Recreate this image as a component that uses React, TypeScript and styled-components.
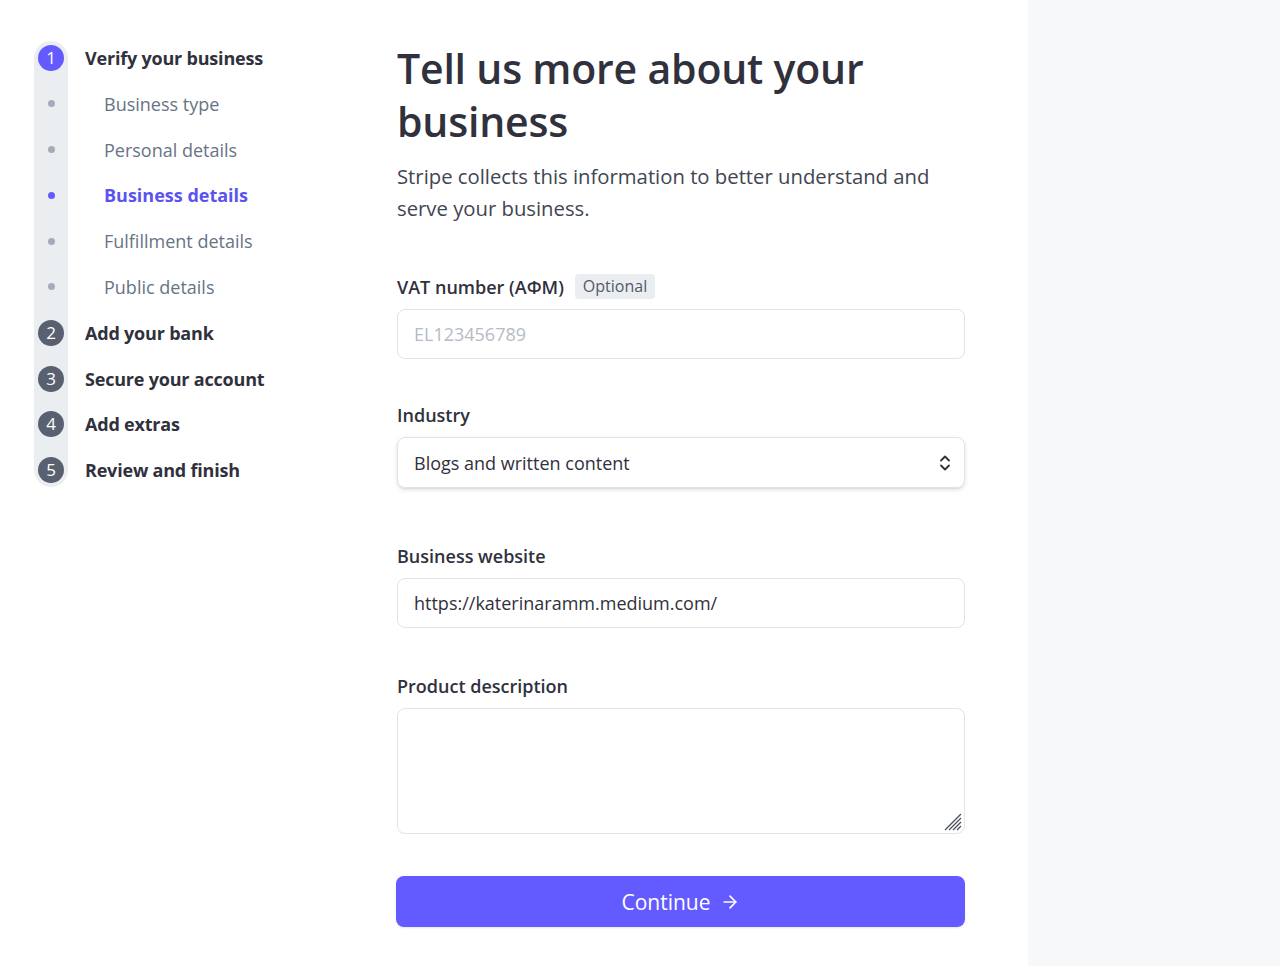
import React from 'react';
import styled, { createGlobalStyle } from 'styled-components';
import { ArrowRight } from 'lucide-react';

const GlobalStyle = createGlobalStyle`
  html, body {
    margin: 0;
    padding: 0;
    background: #ffffff;
  }
  body {
    font-family: "Open Sans", "Noto Sans", "Liberation Sans", sans-serif;
    color: #30313d;
    -webkit-font-smoothing: antialiased;
  }
  * {
    box-sizing: border-box;
  }
`;

const ROW_GAP = 19.8;

const Page = styled.div`
  display: flex;
  min-height: 966px;
`;

const Content = styled.div`
  width: 1028px;
  display: flex;
  align-items: flex-start;
  padding: 41px 0 0 34px;
`;

const Aside = styled.aside`
  flex: 1;
  background: #f6f8fa;
`;

const Nav = styled.nav`
  width: 363px;
  display: flex;
  gap: 17px;
`;

const Track = styled.div`
  width: 34px;
  padding: 4px;
  border-radius: 17px;
  background: #ebeef1;
  display: flex;
  flex-direction: column;
  gap: ${ROW_GAP}px;
`;

const Slot = styled.div`
  height: 26px;
  display: flex;
  align-items: center;
  justify-content: center;
`;

const Circle = styled.div<{ $active?: boolean }>`
  width: 26px;
  height: 26px;
  border-radius: 50%;
  background: ${(p) => (p.$active ? '#635bff' : '#596171')};
  color: #ffffff;
  font-size: 17px;
  line-height: 26px;
  text-align: center;
`;

const Dot = styled.div<{ $active?: boolean }>`
  width: 7px;
  height: 7px;
  border-radius: 50%;
  background: ${(p) => (p.$active ? '#635bff' : '#a3acb9')};
`;

const Labels = styled.div`
  padding-top: 4px;
  display: flex;
  flex-direction: column;
  gap: ${ROW_GAP}px;
`;

const StepLabel = styled.div<{ $sub?: boolean; $active?: boolean }>`
  height: 26px;
  line-height: 26px;
  white-space: nowrap;
  font-size: 18px;
  padding-left: ${(p) => (p.$sub ? '19px' : '0')};
  font-weight: ${(p) => (p.$sub && !p.$active ? 400 : 700)};
  color: ${(p) => (p.$active ? '#5b53f0' : p.$sub ? '#687385' : '#30313d')};
  letter-spacing: ${(p) => (p.$sub ? '0' : '-0.2px')};
`;

const Main = styled.main`
  width: 568px;
  padding-top: 1px;
`;

const Title = styled.h1`
  margin: 0;
  font-size: 41px;
  line-height: 53px;
  font-weight: 600;
  color: #30313d;
  letter-spacing: -0.2px;
`;

const Lead = styled.p`
  margin: 12px 0 0;
  font-size: 20.3px;
  line-height: 32px;
  color: #414552;
`;

const Form = styled.form`
  margin-top: 50px;
  display: flex;
  flex-direction: column;
`;

const Field = styled.div<{ $after: number }>`
  display: flex;
  flex-direction: column;
  gap: 10px;
  margin-bottom: ${(p) => p.$after}px;
`;

const LabelRow = styled.div`
  display: flex;
  align-items: center;
  gap: 11px;
  height: 25px;
`;

const Label = styled.label`
  font-size: 18px;
  font-weight: 600;
  color: #30313d;
  line-height: 24px;
`;

const Badge = styled.span`
  background: #ebeef1;
  color: #545969;
  font-size: 16px;
  line-height: 25px;
  padding: 0 8px;
  border-radius: 4px;
`;

const TextInput = styled.input`
  width: 100%;
  height: 50px;
  border: 1px solid #e0e3e8;
  border-radius: 8px;
  padding: 0 16px;
  font-family: inherit;
  font-size: 18px;
  color: #30313d;
  background: #ffffff;
  outline: none;
  &::placeholder {
    color: #b6bbc4;
  }
`;

const SelectBox = styled.div`
  height: 51px;
  border: 1px solid #e0e3e8;
  border-radius: 8px;
  padding: 0 12px 0 16px;
  display: flex;
  align-items: center;
  justify-content: space-between;
  font-size: 18px;
  color: #30313d;
  box-shadow: 0 2px 4px rgba(60, 66, 87, 0.14), 0 1px 1px rgba(0, 0, 0, 0.06);
`;

const TextareaWrap = styled.div`
  position: relative;
`;

const TextArea = styled.textarea`
  display: block;
  width: 100%;
  height: 126px;
  border: 1px solid #e0e3e8;
  border-radius: 8px;
  padding: 12px 16px;
  font-family: inherit;
  font-size: 18px;
  resize: none;
  outline: none;
`;

const Grip = styled.svg`
  position: absolute;
  right: 2px;
  bottom: 2px;
`;

const SubmitButton = styled.button`
  width: 569px;
  margin-left: -1px;
  height: 51px;
  border: none;
  border-radius: 8px;
  background: #635bff;
  color: #ffffff;
  font-family: inherit;
  font-size: 21px;
  font-weight: 500;
  display: flex;
  align-items: center;
  justify-content: center;
  gap: 9px;
  cursor: pointer;
  box-shadow: 0 1px 2px rgba(50, 50, 93, 0.12);
`;

type Step = { label: string; kind: 'main' | 'sub'; n?: number; active?: boolean };

const steps: Step[] = [
  { label: 'Verify your business', kind: 'main', n: 1, active: true },
  { label: 'Business type', kind: 'sub' },
  { label: 'Personal details', kind: 'sub' },
  { label: 'Business details', kind: 'sub', active: true },
  { label: 'Fulfillment details', kind: 'sub' },
  { label: 'Public details', kind: 'sub' },
  { label: 'Add your bank', kind: 'main', n: 2 },
  { label: 'Secure your account', kind: 'main', n: 3 },
  { label: 'Add extras', kind: 'main', n: 4 },
  { label: 'Review and finish', kind: 'main', n: 5 },
];

const Chevrons = () => (
  <svg width="14" height="20" viewBox="0 0 14 20" fill="none" stroke="#30313d" strokeWidth="1.8" strokeLinecap="round" strokeLinejoin="round">
    <path d="M3 7.5 L7 3.5 L11 7.5" />
    <path d="M3 12.5 L7 16.5 L11 12.5" />
  </svg>
);

export default function App() {
  return (
    <>
      <GlobalStyle />
      <Page>
        <Content>
          <Nav>
            <Track>
              {steps.map((s) => (
                <Slot key={s.label}>
                  {s.kind === 'main' ? <Circle $active={s.active}>{s.n}</Circle> : <Dot $active={s.active} />}
                </Slot>
              ))}
            </Track>
            <Labels>
              {steps.map((s) => (
                <StepLabel key={s.label} $sub={s.kind === 'sub'} $active={s.kind === 'sub' && s.active}>
                  {s.label}
                </StepLabel>
              ))}
            </Labels>
          </Nav>

          <Main>
            <Title>Tell us more about your business</Title>
            <Lead>Stripe collects this information to better understand and serve your business.</Lead>

            <Form onSubmit={(e) => e.preventDefault()}>
              <Field $after={43}>
                <LabelRow>
                  <Label>VAT number (AΦM)</Label>
                  <Badge>Optional</Badge>
                </LabelRow>
                <TextInput placeholder="EL123456789" />
              </Field>

              <Field $after={55}>
                <LabelRow>
                  <Label>Industry</Label>
                </LabelRow>
                <SelectBox>
                  <span>Blogs and written content</span>
                  <Chevrons />
                </SelectBox>
              </Field>

              <Field $after={45}>
                <LabelRow>
                  <Label>Business website</Label>
                </LabelRow>
                <TextInput defaultValue="https://katerinaramm.medium.com/" />
              </Field>

              <Field $after={42}>
                <LabelRow>
                  <Label>Product description</Label>
                </LabelRow>
                <TextareaWrap>
                  <TextArea />
                  <Grip width="20" height="20" viewBox="0 0 20 20" stroke="#4b5060" strokeWidth="1.3">
                    <path d="M18 2 L2 18" />
                    <path d="M18 6 L6 18" />
                    <path d="M18 10 L10 18" />
                    <path d="M18 14 L14 18" />
                  </Grip>
                </TextareaWrap>
              </Field>

              <SubmitButton type="submit">
                Continue
                <ArrowRight size={20} strokeWidth={2} />
              </SubmitButton>
            </Form>
          </Main>
        </Content>
        <Aside />
      </Page>
    </>
  );
}
